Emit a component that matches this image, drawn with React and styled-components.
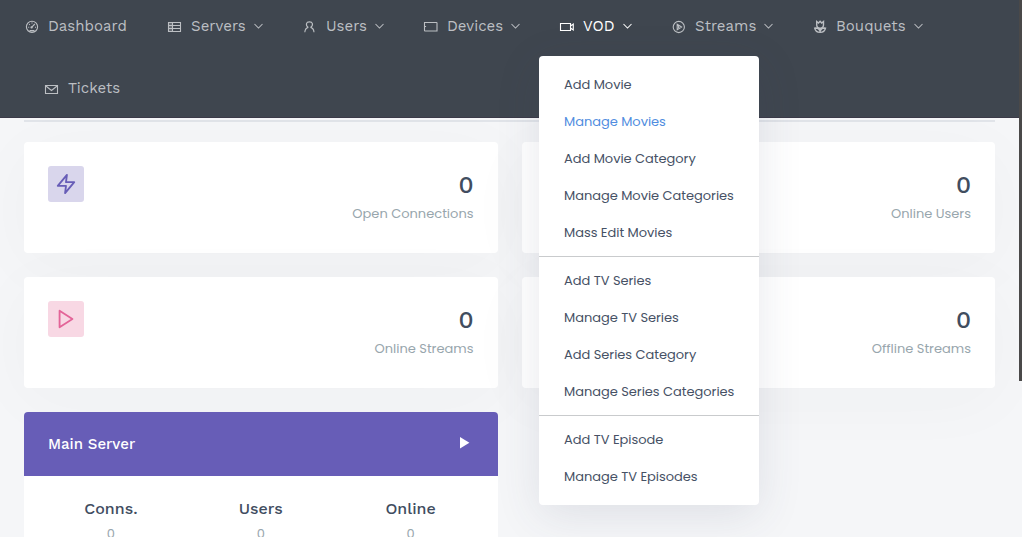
import React from "react";
import styled, { createGlobalStyle } from "styled-components";

const heading = '"Work Sans", "Noto Sans", sans-serif';
const body = 'Poppins, Inter, sans-serif';

const GlobalStyle = createGlobalStyle`
  * { box-sizing: border-box; }
  html, body { margin: 0; height: 537px; overflow: hidden; }
  body { background: #f5f6f8; font-family: ${body}; color: #414d5f; }
`;

const Page = styled.div`
  display: flex;
  height: 537px;
  overflow: hidden;
`;
const Main = styled.div`
  width: 1019px;
  flex: none;
`;
const ScrollThumb = styled.div`
  width: 3px;
  height: 381px;
  background: #4a4949;
`;

const Header = styled.header`
  position: relative;
  z-index: 2;
  height: 118px;
  background: #3f464f;
  border-bottom: 1px solid #3b3a48;
`;
const NavRow = styled.nav`
  display: grid;
  grid-template-columns: 143px 136px 120px 136px 113px 141px 1fr;
  height: 53px;
  padding-left: 24px;
`;
const TicketRow = styled.nav`
  display: flex;
  height: 53px;
  margin-top: 9px;
  padding-left: 44px;
`;
const NavItem = styled.div`
  position: relative;
  display: flex;
  align-items: center;
  color: ${(p) => (p.$active ? "#ffffff" : "#bcbfc3")};
`;
const NavIcon = styled.svg`
  flex: none;
  width: 16px;
  height: 16px;
  margin: -1px ${(p) => p.$gap}px 0 0;
  fill: none;
  stroke: currentColor;
  stroke-width: 1.1;
`;
const NavLabel = styled.span`
  width: ${(p) => p.$w}px;
  margin-bottom: 2px;
  font-family: ${heading};
  font-size: 15px;
  line-height: 20px;
  letter-spacing: 0.03px;
  white-space: nowrap;
`;
const Chevron = styled.svg`
  width: 9px;
  height: 6px;
  margin: 0 0 1px 8px;
  fill: none;
  stroke: currentColor;
  stroke-width: 1.05;
`;

const Dropdown = styled.div`
  position: absolute;
  top: 56px;
  left: -20px;
  width: 220px;
  height: 449px;
  padding: 10px 0;
  background: #fff;
  border-radius: 4px;
  box-shadow: 0 10px 45px rgba(56, 62, 95, 0.12);
`;
const MenuItem = styled.div`
  height: 37px;
  padding-left: 25px;
  font-size: 13px;
  line-height: 37px;
  letter-spacing: -0.03px;
  white-space: nowrap;
  color: ${(p) => (p.$active ? "#508de0" : "#465165")};
`;
const Divider = styled.div`
  height: 1px;
  margin: 5px 0;
  background: #c9cbcd;
`;

const Content = styled.main`
  padding: 2px 24px 0;
`;
const Rule = styled.div`
  height: 2px;
  margin-bottom: 20px;
  background: #e1e4e9;
`;
const Grid = styled.div`
  display: grid;
  grid-template-columns: 1fr 1fr;
  gap: 24px;
`;
const Card = styled.section`
  height: 111px;
  display: flex;
  justify-content: space-between;
  padding: 24px;
  background: #fff;
  border-radius: 4px;
  box-shadow: 0 12px 70px rgba(56, 65, 74, 0.03);
`;
const Badge = styled.div`
  display: flex;
  align-items: center;
  justify-content: center;
  width: 36px;
  height: 36px;
  border-radius: 3px;
  color: ${(p) => p.$color};
  background: ${(p) => p.$bg};
`;
const BadgeIcon = styled.svg`
  width: 22px;
  height: 22px;
  fill: none;
  stroke: currentColor;
  stroke-width: 2;
  stroke-linejoin: round;
`;
const Stat = styled.div`
  text-align: right;
`;
const Value = styled.div`
  margin-top: 4px;
  font-family: ${heading};
  font-size: 24px;
  line-height: 30px;
  font-weight: 500;
  color: #414d5f;
`;
const Caption = styled.div`
  margin-top: 4px;
  font-size: 13px;
  line-height: 20px;
  color: #98a6ad;
`;

const ServerCard = styled.section`
  height: 160px;
  background: #fff;
  border-radius: 4px 4px 0 0;
  overflow: hidden;
`;
const ServerHead = styled.div`
  display: flex;
  align-items: center;
  justify-content: space-between;
  height: 64px;
  padding: 0 28px 0 24px;
  background: #675db7;
  color: #fff;
`;
const ServerName = styled.span`
  font-family: ${heading};
  font-size: 15px;
  font-weight: 500;
`;
const PlayMark = styled.svg`
  width: 10px;
  height: 12px;
  margin-top: -3px;
  fill: #fff;
`;
const ServerStats = styled.div`
  display: grid;
  grid-template-columns: 1fr 1fr 1fr;
  padding: 23px 12px 0;
  text-align: center;
`;
const ServerLabel = styled.div`
  font-family: ${heading};
  font-size: 16px;
  line-height: 20px;
  font-weight: 500;
`;
const ServerValue = styled.div`
  margin-top: 5px;
  font-size: 13px;
  line-height: 20px;
  color: #98a6ad;
`;

const icons = {
  dashboard: (
    <>
      <circle cx="8" cy="8.8" r="5.6" />
      <path d="M7.6 9.4 10.8 6M4.2 9.2h1M5.2 6.2l.7.7M8 4.6v.9M11 9.2h1M5.6 12.6h4.8" />
      <circle cx="7.6" cy="9.4" r=".6" />
    </>
  ),
  servers: (
    <>
      <path d="M1.5 4.5h12v9h-12zM1.5 7.5h12M1.5 10.5h12M5.5 4.5v9" />
      <path d="M2 6h3M2 9h3M2 12h3" opacity=".6" />
    </>
  ),
  users: (
    <path d="M4.9 9.5C3.5 8.6 2.8 6.9 3.1 5.6 3.4 4.3 4.3 3.9 6 3.9s2.7.4 3 1.7c.3 1.3-.5 3-1.9 3.9M4.9 9.4C2.6 10.1 1.6 11.4 1.4 14.2M7.1 9.4c2.4.7 3.3 2 3.5 4.8" transform="translate(.4 0)" />
  ),
  devices: <path d="M1.5 4.5h12c.3 0 .5.2.5.5v8h-12c-.3 0-.5-.2-.5-.5zM1.8 8.5h1.3" />,
  vod: <path d="M1.5 5.5h10v7h-10zM11.5 8l2.8-2v6l-2.8-2" />,
  streams: (
    <>
      <circle cx="6.8" cy="9" r="5.6" />
      <path d="M5.2 6.2v5.6l4.4-2.8zM6.6 8v2" />
    </>
  ),
  bouquets: (
    <g strokeWidth="1.4">
      <path d="M3.7 3.5v3.2a3.4 3.4 0 0 0 6.8 0V3.5L8.7 5 7.1 3.2 5.5 5 3.7 3.5ZM7.1 10v4.2M7.1 14.4C4 14.4 2.3 12.9 1.7 10.1c2.5-.2 4.6.8 5.4 2.8.8-2 2.9-3 5.4-2.8-.6 2.8-2.3 4.3-5.4 4.3Z" />
    </g>
  ),
  tickets: <path d="M1.5 5.5h12v8h-12zM1.6 5.8l5.9 4.7 5.9-4.7" />,
};

const nav = [
  { icon: "dashboard", label: "Dashboard", w: 80, gap: 8 },
  { icon: "servers", label: "Servers", w: 55, gap: 8, menu: true },
  { icon: "users", label: "Users", w: 41, gap: 7, menu: true },
  { icon: "devices", label: "Devices", w: 56, gap: 8, menu: true },
  { icon: "vod", label: "VOD", w: 32, gap: 8, menu: true, active: true },
  { icon: "streams", label: "Streams", w: 61, gap: 7, menu: true },
  { icon: "bouquets", label: "Bouquets", w: 70, gap: 7, menu: true },
];

const menuGroups = [
  ["Add Movie", "Manage Movies", "Add Movie Category", "Manage Movie Categories", "Mass Edit Movies"],
  ["Add TV Series", "Manage TV Series", "Add Series Category", "Manage Series Categories"],
  ["Add TV Episode", "Manage TV Episodes"],
];

const zap = <path d="M13 2 3 14h9l-1 8 10-12h-9l1-8z" />;
const play = <path d="M5 3l14 9-14 9z" />;
const stats = [
  { label: "Open Connections", color: "#675db7", bg: "#d9d6ec", icon: zap },
  { label: "Online Users", color: "#1abc9c", bg: "#c6eee6", icon: zap },
  { label: "Online Streams", color: "#e36498", bg: "#f8d8e4", icon: play },
  { label: "Offline Streams", color: "#4a81d4", bg: "#d2e0f4", icon: play },
];

function NavEntry({ icon, label, w, gap, menu, active, children }) {
  return (
    <NavItem $active={active}>
      <NavIcon viewBox="0 0 16 16" $gap={gap}>{icons[icon]}</NavIcon>
      <NavLabel $w={w}>{label}</NavLabel>
      {menu && <Chevron viewBox="0 0 9 6"><path d="M.5 1 4.5 5l4-4" /></Chevron>}
      {children}
    </NavItem>
  );
}

export default function App() {
  return (
    <Page>
      <GlobalStyle />
      <Main>
        <Header>
          <NavRow>
            {nav.map((n) => (
              <NavEntry key={n.label} {...n}>
                {n.active && (
                  <Dropdown>
                    {menuGroups.map((group, i) => (
                      <React.Fragment key={i}>
                        {i > 0 && <Divider />}
                        {group.map((text) => (
                          <MenuItem key={text} $active={text === "Manage Movies"}>{text}</MenuItem>
                        ))}
                      </React.Fragment>
                    ))}
                  </Dropdown>
                )}
              </NavEntry>
            ))}
          </NavRow>
          <TicketRow>
            <NavEntry icon="tickets" label="Tickets" w={52} gap={8} />
          </TicketRow>
        </Header>
        <Content>
          <Rule />
          <Grid>
            {stats.map((s) => (
              <Card key={s.label}>
                <Badge $color={s.color} $bg={s.bg}>
                  <BadgeIcon viewBox="0 0 24 24">{s.icon}</BadgeIcon>
                </Badge>
                <Stat>
                  <Value>0</Value>
                  <Caption>{s.label}</Caption>
                </Stat>
              </Card>
            ))}
            <ServerCard>
              <ServerHead>
                <ServerName>Main Server</ServerName>
                <PlayMark viewBox="0 0 10 12"><path d="M0 0l9.4 5.8L0 11.6z" /></PlayMark>
              </ServerHead>
              <ServerStats>
                {["Conns.", "Users", "Online"].map((label) => (
                  <div key={label}>
                    <ServerLabel>{label}</ServerLabel>
                    <ServerValue>0</ServerValue>
                  </div>
                ))}
              </ServerStats>
            </ServerCard>
          </Grid>
        </Content>
      </Main>
      <ScrollThumb />
    </Page>
  );
}
